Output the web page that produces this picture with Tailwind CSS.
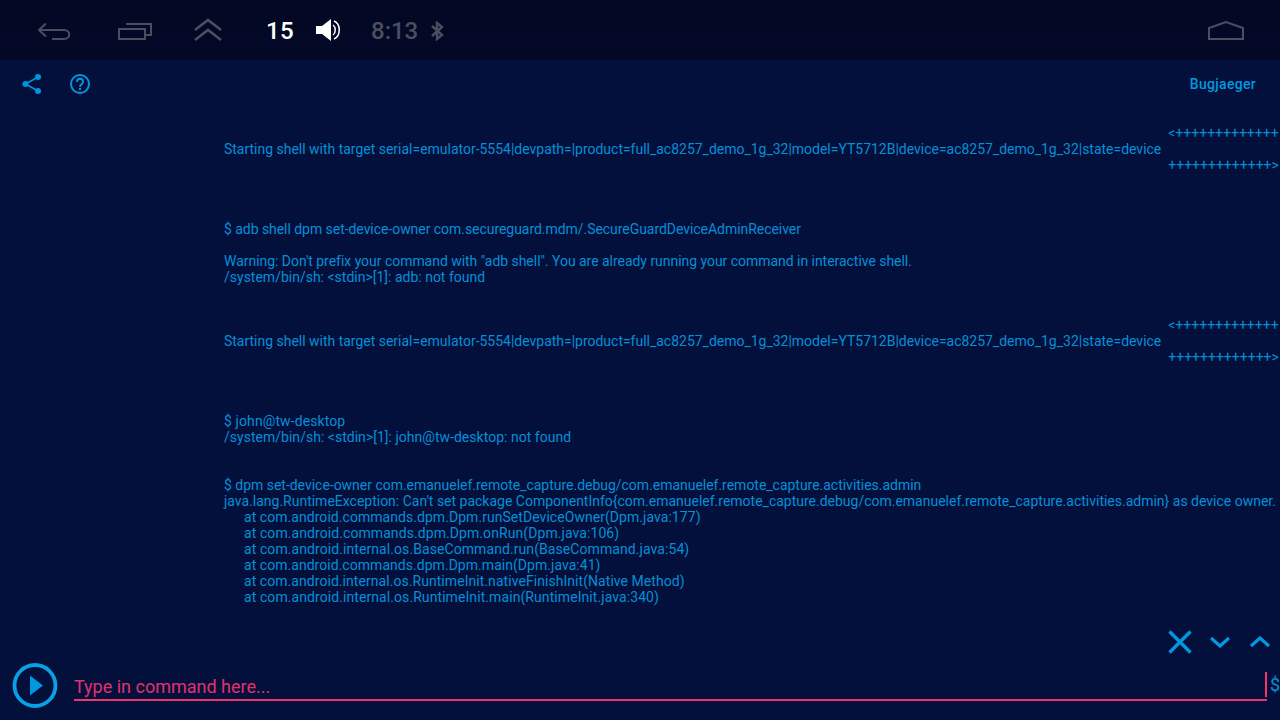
<!DOCTYPE html>
<html lang="en">
<head>
    <meta charset="UTF-8">
    <title>Bugjaeger</title>
    <script src="https://cdn.jsdelivr.net/npm/@tailwindcss/browser@4"></script>
</head>
<body class="w-[1280px] h-[720px] overflow-hidden bg-[#04103c] font-['Roboto',sans-serif] text-[#058fd6]">
    <!-- system bar -->
    <div class="relative h-[60px] bg-gradient-to-b from-[#030924] to-[#020826] flex items-center">
        <svg class="ml-[37px] w-[35px] h-[19px] mt-[2px]" viewBox="0 0 35 19" fill="none" stroke="#4a4f60" stroke-width="2">
            <path d="M9 1.5 L2 8 L9 14.5 M2 8 H27 C34 8 34 17 27 17 H15"/>
        </svg>
        <svg class="ml-[45px] w-[36px] h-[19px] mt-[3px]" viewBox="0 0 36 19" fill="none" stroke="#4a4f60" stroke-width="2">
            <path d="M2 7 H28 V17 H2 Z M9 2 H34 V13 H29"/>
        </svg>
        <svg class="ml-[41px] w-[28px] h-[24px] -mt-[1px]" viewBox="0 0 28 24" fill="none" stroke="#4a4f60" stroke-width="2.6">
            <path d="M1 12 L14 2 L27 12 M1 22 L14 12 L27 22"/>
        </svg>
        <span class="ml-[44px] mt-[2px] w-[28px] text-[24px] leading-[32px] font-medium text-white tracking-[0.4px]">15</span>
        <svg class="ml-[22px] w-[26px] h-[24px]" viewBox="0 0 26 24" fill="none">
            <path d="M0 8 H6 L15 1 V23 L6 16 H0 Z" fill="#fff"/>
            <path d="M17 7 C20 9 20 15 17 17 M18 3 C25 6 25 18 18 21" stroke="#fff" stroke-width="1.5"/>
        </svg>
        <span class="ml-[29px] mt-[2px] text-[24px] leading-[32px] font-medium text-[#4a4f60]">8:13</span>
        <svg class="ml-[12px] mt-[1px] w-[14px] h-[20px]" viewBox="0 0 14 20" fill="none" stroke="#4a4f60" stroke-width="2.4">
            <path d="M2 5 L12 14 L7 18 V2 L12 6 L2 15"/>
        </svg>
        <svg class="absolute left-[1208px] top-[21px] w-[36px] h-[19px]" viewBox="0 0 36 19" fill="none" stroke="#4a4f60" stroke-width="2">
            <path d="M1 18 V7 L18 1 L35 7 V18 Z"/>
        </svg>
    </div>

    <!-- toolbar -->
    <div class="h-[48px] flex items-center">
        <svg class="ml-[22px] w-[20px] h-[20px]" viewBox="0 0 20 20" fill="#0095dc" stroke="#0095dc">
            <circle cx="3.5" cy="10" r="3" stroke="none"/>
            <circle cx="16" cy="3" r="3" stroke="none"/>
            <circle cx="16" cy="17" r="3" stroke="none"/>
            <path d="M16 3 L3.5 10 L16 17" fill="none" stroke-width="1.6"/>
        </svg>
        <svg class="ml-[28px] w-[20px] h-[20px]" viewBox="0 0 20 20" fill="none" stroke="#0095dc" stroke-width="2">
            <circle cx="10" cy="10" r="9"/>
            <path d="M7 8 C7 3.8 13 3.8 13 8 C13 10.4 10 10.2 10 12.8"/>
            <path d="M10 14 V16"/>
        </svg>
        <span class="ml-auto mr-[24px] text-[14px] leading-[16px] font-medium tracking-[0.3px] text-[#0099e0]">Bugjaeger</span>
    </div>

    <!-- shell output -->
    <div class="h-[505px] pt-[17px] pl-[224px] overflow-hidden text-[14px] leading-[16px] whitespace-nowrap">
        <div class="flex items-center h-[48px]">
            <span class="tracking-[-0.014px]">Starting shell with target serial=emulator-5554|devpath=|product=full_ac8257_demo_1g_32|model=YT5712B|device=ac8257_demo_1g_32|state=device</span>
            <div class="ml-[7px]">
                <div>&lt;+++++++++++++</div>
                <div class="h-[16px]"></div>
                <div>+++++++++++++&gt;</div>
            </div>
        </div>
        <div class="mt-[48px]">
            <div class="tracking-[-0.047px]">$ adb shell dpm set-device-owner com.secureguard.mdm/.SecureGuardDeviceAdminReceiver</div>
            <div class="h-[16px]"></div>
            <div class="tracking-[-0.036px]">Warning: Don't prefix your command with "adb shell". You are already running your command in interactive shell.</div>
            <div>/system/bin/sh: &lt;stdin&gt;[1]: adb: not found</div>
        </div>
        <div class="flex items-center h-[48px] mt-[32px]">
            <span class="tracking-[-0.014px]">Starting shell with target serial=emulator-5554|devpath=|product=full_ac8257_demo_1g_32|model=YT5712B|device=ac8257_demo_1g_32|state=device</span>
            <div class="ml-[7px]">
                <div>&lt;+++++++++++++</div>
                <div class="h-[16px]"></div>
                <div>+++++++++++++&gt;</div>
            </div>
        </div>
        <div class="mt-[48px]">
            <div class="tracking-[0.1px]">$ john@tw-desktop</div>
            <div class="tracking-[0.02px]">/system/bin/sh: &lt;stdin&gt;[1]: john@tw-desktop: not found</div>
        </div>
        <div class="mt-[32px]">
            <div class="tracking-[-0.02px]">$ dpm set-device-owner com.emanuelef.remote_capture.debug/com.emanuelef.remote_capture.activities.admin</div>
            <div class="tracking-[-0.006px]">java.lang.RuntimeException: Can't set package ComponentInfo{com.emanuelef.remote_capture.debug/com.emanuelef.remote_capture.activities.admin} as device owner.</div>
            <div class="pl-[20px]">
                <div class="tracking-[0.05px]">at com.android.commands.dpm.Dpm.runSetDeviceOwner(Dpm.java:177)</div>
                <div class="tracking-[0.08px]">at com.android.commands.dpm.Dpm.onRun(Dpm.java:106)</div>
                <div class="tracking-[0.08px]">at com.android.internal.os.BaseCommand.run(BaseCommand.java:54)</div>
                <div class="tracking-[0.04px]">at com.android.commands.dpm.Dpm.main(Dpm.java:41)</div>
                <div class="tracking-[0.055px]">at com.android.internal.os.RuntimeInit.nativeFinishInit(Native Method)</div>
                <div class="tracking-[0.08px]">at com.android.internal.os.RuntimeInit.main(RuntimeInit.java:340)</div>
            </div>
        </div>
    </div>

    <!-- search controls -->
    <div class="h-[40px] mt-[10px] flex items-center justify-end pb-[2px]">
        <svg class="w-[24px] h-[24px]" viewBox="0 0 24 24" fill="none" stroke="#0099e0" stroke-width="3.4">
            <path d="M1.5 1.5 L22.5 22.5 M22.5 1.5 L1.5 22.5"/>
        </svg>
        <svg class="ml-[18px] w-[20px] h-[12px]" viewBox="0 0 20 12" fill="none" stroke="#0099e0" stroke-width="3.2">
            <path d="M1 2 L10 10 L19 2"/>
        </svg>
        <svg class="ml-[20px] mr-[10px] w-[20px] h-[12px]" viewBox="0 0 20 12" fill="none" stroke="#0099e0" stroke-width="3.2">
            <path d="M1 10 L10 2 L19 10"/>
        </svg>
    </div>

    <!-- command row -->
    <div class="flex items-start h-[57px]">
        <svg class="ml-[12px] w-[46px] h-[46px]" viewBox="0 0 46 46" fill="none">
            <circle cx="23" cy="22.5" r="20.5" stroke="#0aa0e6" stroke-width="3.8"/>
            <path d="M18 12.5 L31 22.5 L18 32.5 Z" fill="#0099e0"/>
        </svg>
        <div class="relative ml-[16px] w-[1194px] h-[38px] border-b-2 border-[#f0326f]">
            <span class="absolute left-0 top-[13px] text-[18px] leading-[22px] text-[#e0306f]">Type in command here...</span>
            <div class="absolute right-0 top-[9px] w-[2px] h-[25px] bg-[#ff2d6f]"></div>
        </div>
        <span class="ml-[3px] mt-[11px] text-[18px] leading-[22px]">$</span>
    </div>
</body>
</html>
